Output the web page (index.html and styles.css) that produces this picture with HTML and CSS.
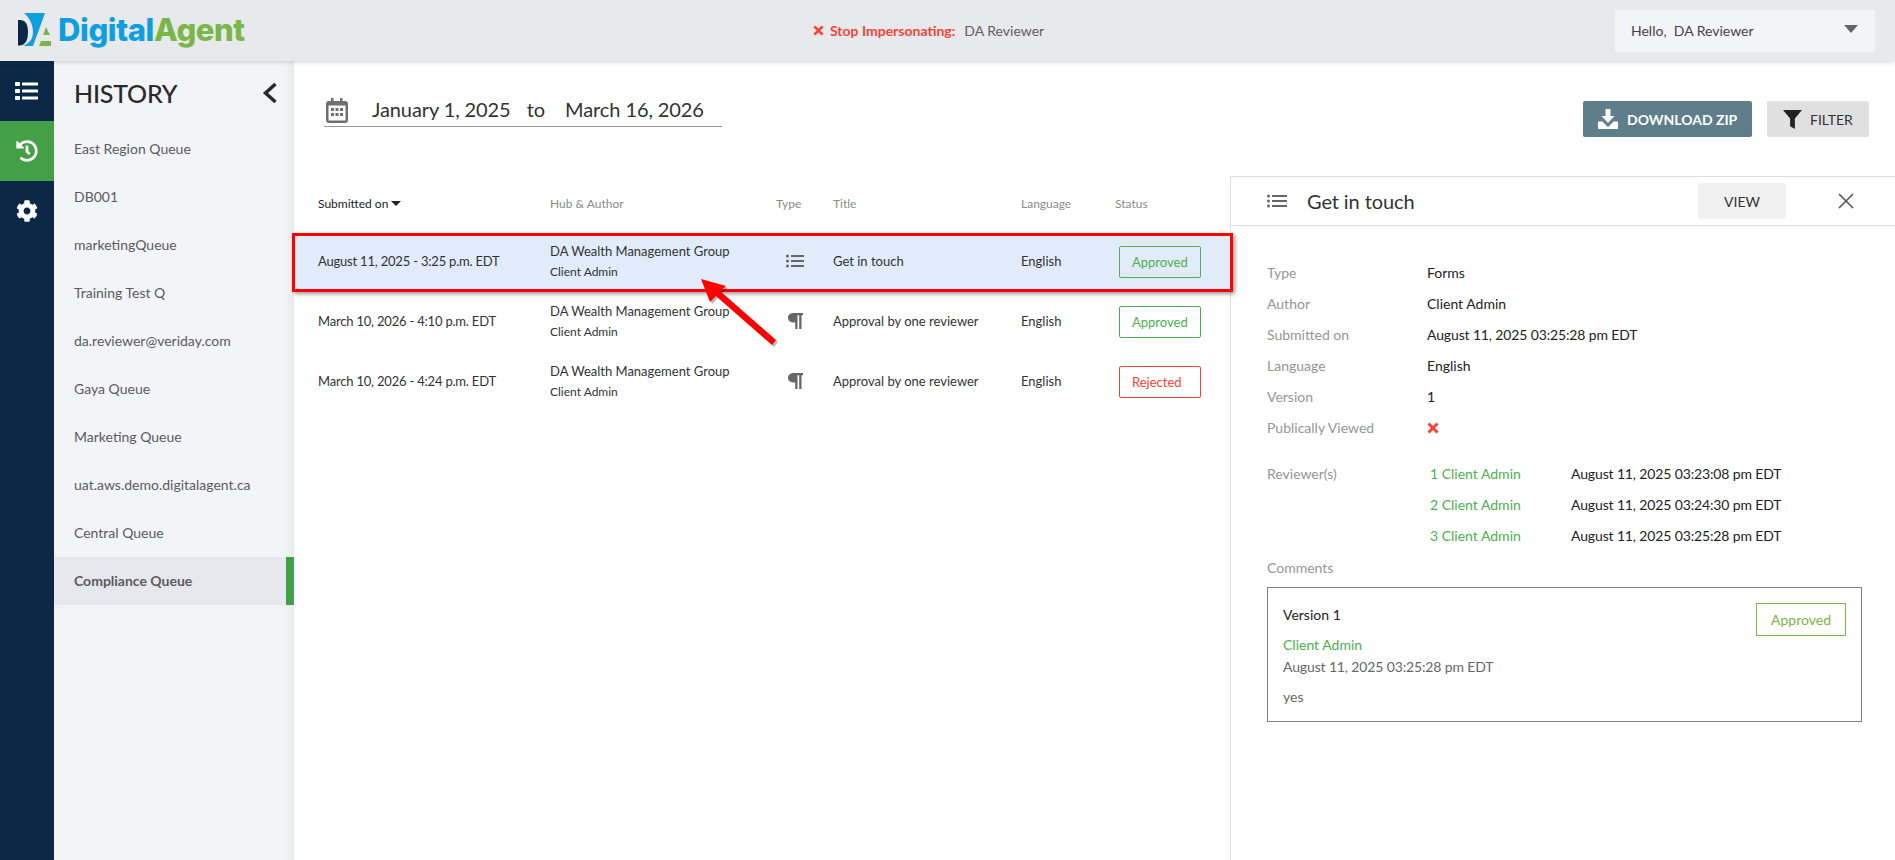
FILE: index.html
```html
<!DOCTYPE html>
<html lang="en">
<head>
<meta charset="utf-8">
<title>History</title>
<link rel="stylesheet" href="styles.css">
</head>
<body>
<header class="topbar">
  <div class="logo">
    <svg class="logo-mark" viewBox="0 0 40 36" width="40" height="36">
      <path fill="#0b2947" d="M0 8h2c6 0 8 5 8 12s-2 13-8 13.500H0z"/>
      <path fill="#0f9fdf" d="M6 1h21L15 34H5c5-2 10-6 10-14S11 5 6 1z"/>
      <path fill="#7ab648" d="M28 15l4 8h-7zM23 29h10v5H21z"/>
    </svg>
    <span class="logo-text"><span class="logo-blue">Digital</span><span class="logo-green">Agent</span></span>
  </div>
  <div class="impersonate">
    <svg class="x-icon" viewBox="0 0 12 12" width="11" height="11"><path d="M1.500 1.500l9 9M10.500 1.500l-9 9"/></svg>
    <span class="stop">Stop Impersonating:</span>
    <span>DA Reviewer</span>
  </div>
  <div class="hello">
    <span>Hello,&nbsp; DA Reviewer</span>
    <span class="caret"></span>
  </div>
</header>

<div class="main">
  <nav class="rail">
    <a class="rail-item">
      <svg viewBox="0 0 24 20" width="24" height="20" fill="#fff"><rect x="0" y="1" width="5" height="4" rx=".8"/><rect x="0" y="8" width="5" height="4" rx=".8"/><rect x="0" y="15" width="5" height="4" rx=".8"/><rect x="7" y="1.500" width="16" height="3" rx=".6"/><rect x="7" y="8.500" width="16" height="3" rx=".6"/><rect x="7" y="15.500" width="16" height="3" rx=".6"/></svg>
    </a>
    <a class="rail-item rail-active">
      <svg viewBox="0 0 512 512" width="22" height="22" fill="#fff"><path d="M504 255.531c.253 136.64-111.18 248.372-247.82 248.468-59.015.042-113.223-20.53-155.822-54.911-11.077-8.94-11.905-25.541-1.839-35.607l11.267-11.267c8.609-8.609 22.353-9.551 31.891-1.984C173.062 425.135 212.781 440 256 440c101.705 0 184-82.311 184-184 0-101.705-82.311-184-184-184-48.814 0-93.149 18.969-126.068 49.932l50.754 50.754c10.08 10.08 2.941 27.314-11.313 27.314H24c-8.837 0-16-7.163-16-16V38.627c0-14.254 17.234-21.393 27.314-11.314l49.372 49.372C129.209 34.136 189.552 8 256 8c136.81 0 247.747 110.78 248 247.531zm-180.912 78.784l9.823-12.63c8.138-10.463 6.253-25.542-4.21-33.679L288 256.349V152c0-13.255-10.745-24-24-24h-16c-13.255 0-24 10.745-24 24v135.651l65.409 50.874c10.463 8.137 25.541 6.253 33.679-4.21z"/></svg>
    </a>
    <a class="rail-item">
      <svg viewBox="0 0 512 512" width="22" height="22" fill="#fff"><path d="M487.4 315.7l-42.6-24.6c4.3-23.2 4.3-47 0-70.2l42.6-24.6c4.9-2.8 7.1-8.6 5.5-14-11.1-35.6-30-67.8-54.7-94.6-3.8-4.1-10-5.1-14.8-2.3L380.8 110c-17.9-15.4-38.5-27.3-60.8-35.1V25.8c0-5.6-3.9-10.5-9.4-11.7-36.7-8.2-74.3-7.8-109.2 0-5.5 1.2-9.4 6.1-9.4 11.7V75c-22.2 7.9-42.8 19.8-60.8 35.1L88.7 85.5c-4.9-2.8-11-1.9-14.8 2.3-24.7 26.7-43.6 58.9-54.7 94.6-1.7 5.4.6 11.2 5.5 14L67.3 221c-4.3 23.2-4.3 47 0 70.2l-42.6 24.6c-4.9 2.8-7.1 8.6-5.5 14 11.1 35.6 30 67.8 54.7 94.6 3.8 4.1 10 5.1 14.8 2.3l42.6-24.6c17.9 15.4 38.5 27.3 60.8 35.1v49.2c0 5.6 3.9 10.5 9.4 11.7 36.7 8.2 74.3 7.8 109.2 0 5.5-1.2 9.4-6.1 9.4-11.7v-49.2c22.2-7.9 42.8-19.8 60.8-35.1l42.6 24.6c4.9 2.8 11 1.9 14.8-2.3 24.7-26.7 43.6-58.9 54.7-94.6 1.5-5.5-.7-11.3-5.6-14.1zM256 336c-44.1 0-80-35.9-80-80s35.9-80 80-80 80 35.9 80 80-35.9 80-80 80z"/></svg>
    </a>
  </nav>

  <aside class="sidebar">
    <div class="side-head">
      <h1>HISTORY</h1>
      <svg class="chev" viewBox="0 0 16 22" width="16" height="22"><path d="M13.500 2L3.500 11l10 9"/></svg>
    </div>
    <ul class="queues">
      <li>East Region Queue</li>
      <li>DB001</li>
      <li>marketingQueue</li>
      <li>Training Test Q</li>
      <li>da.reviewer@veriday.com</li>
      <li>Gaya Queue</li>
      <li>Marketing Queue</li>
      <li>uat.aws.demo.digitalagent.ca</li>
      <li>Central Queue</li>
      <li class="queue-active">Compliance Queue</li>
    </ul>
  </aside>

  <section class="content">
    <div class="toolbar">
      <div class="dates">
        <svg class="cal" viewBox="0 0 22 25" width="22" height="25"><path fill="#6f6f6f" d="M5 0h2.500v3H14V0h2.500v3H19a3 3 0 0 1 3 3v16a3 3 0 0 1-3 3H3a3 3 0 0 1-3-3V6a3 3 0 0 1 3-3h2z"/><rect x="2.500" y="7.500" width="17" height="15" fill="#fff"/><g fill="#6f6f6f"><rect x="5" y="10" width="3" height="3"/><rect x="9.500" y="10" width="3" height="3"/><rect x="14" y="10" width="3" height="3"/><rect x="5" y="15" width="3" height="3"/><rect x="9.500" y="15" width="3" height="3"/><rect x="14" y="15" width="3" height="3"/></g></svg>
        <span class="date-val">January 1, 2025</span>
        <span class="date-to">to</span>
        <span class="date-val">March 16, 2026</span>
      </div>
      <div class="actions">
        <button class="btn btn-dark">
          <svg viewBox="0 0 20 20" width="20" height="20" fill="#fff"><path d="M7.500 0h5v7h4L10 14 3.500 7h4z"/><path d="M0 12.500h4.500L10 18l5.500-5.500H20V20H0z"/></svg>
          DOWNLOAD ZIP
        </button>
        <button class="btn btn-light">
          <svg viewBox="0 0 20 20" width="19" height="19" fill="#222"><path d="M0 0h20l-7.500 9v11l-5-3V9z"/></svg>
          FILTER
        </button>
      </div>
    </div>

    <div class="lower">
      <div class="table">
        <div class="row head">
          <span class="th-sort">Submitted on <i class="sort-caret"></i></span>
          <span>Hub &amp; Author</span>
          <span>Type</span>
          <span>Title</span>
          <span>Language</span>
          <span>Status</span>
        </div>
        <div class="row item selected">
          <span class="when">August 11, 2025 - 3:25 p.m. EDT</span>
          <div class="hub"><span>DA Wealth Management Group</span><small>Client Admin</small></div>
          <svg class="type-list" viewBox="0 0 18 14" width="18" height="14" fill="#666"><circle cx="1.500" cy="2" r="1.500"/><circle cx="1.500" cy="7" r="1.500"/><circle cx="1.500" cy="12" r="1.500"/><rect x="5" y="1" width="13" height="2"/><rect x="5" y="6" width="13" height="2"/><rect x="5" y="11" width="13" height="2"/></svg>
          <span>Get in touch</span>
          <span>English</span>
          <span class="pill ok">Approved</span>
        </div>
        <div class="row item">
          <span class="when">March 10, 2026 - 4:10 p.m. EDT</span>
          <div class="hub"><span>DA Wealth Management Group</span><small>Client Admin</small></div>
          <svg class="type-para" viewBox="0 0 15 16" width="15" height="16" fill="#666"><path d="M6 0h9v2.200h-1.500V16h-2.300V2.200H9.500V16H7.200V9.500H6C2.500 9.500 0 7.500 0 4.700S2.500 0 6 0z"/></svg>
          <span>Approval by one reviewer</span>
          <span>English</span>
          <span class="pill ok">Approved</span>
        </div>
        <div class="row item">
          <span class="when">March 10, 2026 - 4:24 p.m. EDT</span>
          <div class="hub"><span>DA Wealth Management Group</span><small>Client Admin</small></div>
          <svg class="type-para" viewBox="0 0 15 16" width="15" height="16" fill="#666"><path d="M6 0h9v2.200h-1.500V16h-2.300V2.200H9.500V16H7.200V9.500H6C2.500 9.500 0 7.500 0 4.700S2.500 0 6 0z"/></svg>
          <span>Approval by one reviewer</span>
          <span>English</span>
          <span class="pill bad">Rejected</span>
        </div>
        <svg class="arrow" viewBox="0 0 90 76" width="90" height="76">
          <path fill="#000" opacity=".28" d="M6 4l25 7-6 5 56 49-4 5-56-49-6 6z"/>
          <path fill="#f00" d="M4 2l25 7-6 5 56 49-4 5-56-49-6 6z"/>
        </svg>
      </div>

      <aside class="detail">
        <div class="detail-head">
          <svg viewBox="0 0 20 14" width="20" height="14" fill="#666"><circle cx="1.500" cy="2" r="1.500"/><circle cx="1.500" cy="7" r="1.500"/><circle cx="1.500" cy="12" r="1.500"/><rect x="5" y="1" width="15" height="2"/><rect x="5" y="6" width="15" height="2"/><rect x="5" y="11" width="15" height="2"/></svg>
          <h2>Get in touch</h2>
          <button class="view">VIEW</button>
          <svg class="close" viewBox="0 0 18 18" width="18" height="18"><path d="M2 2l14 14M16 2L2 16"/></svg>
        </div>
        <div class="detail-body">
          <dl class="facts">
            <dt>Type</dt><dd>Forms</dd>
            <dt>Author</dt><dd>Client Admin</dd>
            <dt>Submitted on</dt><dd class="stamp">August 11, 2025 03:25:28 pm EDT</dd>
            <dt>Language</dt><dd>English</dd>
            <dt>Version</dt><dd>1</dd>
            <dt>Publically Viewed</dt><dd><svg class="x-icon" viewBox="0 0 12 12" width="12" height="12"><path d="M1.500 1.500l9 9M10.500 1.500l-9 9"/></svg></dd>
          </dl>
          <div class="reviewers">
            <span class="rv-label">Reviewer(s)</span>
            <span class="rv-name">1 Client Admin</span><span class="stamp">August 11, 2025 03:23:08 pm EDT</span>
            <span class="rv-name rv-col">2 Client Admin</span><span class="stamp">August 11, 2025 03:24:30 pm EDT</span>
            <span class="rv-name rv-col">3 Client Admin</span><span class="stamp">August 11, 2025 03:25:28 pm EDT</span>
          </div>
          <div class="comments-label">Comments</div>
          <div class="comment">
            <span class="comment-badge">Approved</span>
            <div class="c-version">Version 1</div>
            <div class="c-author">Client Admin</div>
            <div class="c-date stamp">August 11, 2025 03:25:28 pm EDT</div>
            <div class="c-text">yes</div>
          </div>
        </div>
      </aside>
    </div>
  </section>
</div>
</body>
</html>
```

FILE: styles.css
```css
* { box-sizing: border-box; }
html, body { margin: 0; height: 100%; }
body {
  font-family: "Lato", "Liberation Sans", sans-serif;
  font-size: 14px;
  color: #333;
  background: #fff;
  overflow: hidden;
  display: flex;
  flex-direction: column;
}

/* top bar */
.topbar {
  height: 61px;
  flex: none;
  background: #e7e9ed;
  box-shadow: 0 1px 4px rgba(0, 0, 0, .18);
  display: flex;
  align-items: center;
  position: relative;
  z-index: 3;
}
.logo { width: 813px; display: flex; align-items: center; padding: 0 0 1px 18px; }
.logo-mark { margin-top: -1px; flex: none; }
.logo-text { font-family: "Inter", "Liberation Sans", sans-serif; font-weight: 800; font-size: 31px; letter-spacing: -.4px; line-height: 1; margin-top: -2px; }
.logo-blue { color: #0f9fdf; }
.logo-green { color: #7ab648; }
.impersonate { display: flex; align-items: center; width: 802px; color: #5f5f5f; font-size: 14px; }
.impersonate .x-icon { margin-right: 6px; }
.stop { color: #f44336; font-weight: 700; margin-right: 9px; }
.x-icon path { stroke: #f44336; stroke-width: 3; fill: none; }
.hello {
  width: 260px; height: 42px; background: #f3f4f7;
  display: flex; align-items: center; justify-content: space-between;
  padding: 0 17px 0 16px; color: #444; font-size: 14px;
}
.caret { width: 0; height: 0; border: 7px solid transparent; border-top: 8px solid #666; border-bottom: 0; margin-top: -3px; }

/* layout */
.main { flex: 1; display: flex; min-height: 0; }
.rail { width: 54px; flex: none; background: #0b2947; }
.rail-item { height: 60px; display: flex; align-items: center; justify-content: center; }
.rail-active { background: #43a047; }

.sidebar { width: 240px; flex: none; background: #f3f4f7; box-shadow: inset -14px 0 12px -12px rgba(0, 0, 0, .06); }
.side-head { height: 64px; display: flex; align-items: center; justify-content: space-between; padding: 0 16px 0 20px; }
.side-head h1 { margin: 0; font-size: 25px; font-weight: 500; color: #2a2a2a; letter-spacing: -.2px; }
.chev path { fill: none; stroke: #2a2a2a; stroke-width: 3.500; }
.queues { list-style: none; margin: 0; padding: 0; }
.queues li { height: 48px; line-height: 48px; padding-left: 20px; color: #5b5b5b; font-size: 14px; }
.queues .queue-active { background: #e6e8ed; font-weight: 700; border-right: 8px solid #43a047; }

.content { flex: 1; min-width: 0; display: flex; flex-direction: column; }
.toolbar { height: 115px; flex: none; display: flex; justify-content: space-between; padding: 40px 26px 0 30px; }
.dates { width: 398px; height: 35px; margin-top: -9px; border-bottom: 1px solid #999; display: flex; align-items: center; font-size: 20px; color: #333; }
.date-val { letter-spacing: -.1px; }
.cal { margin: 2px 24px 0 2px; flex: none; }
.date-to { margin: 0 20px 0 16px; }
.actions { display: flex; gap: 15px; }
.btn { height: 36px; border: 0; border-radius: 2px; display: flex; align-items: center; font-family: inherit; font-size: 14px; padding: 0; }
.btn-dark { width: 169px; background: #5f7d8b; color: #fff; font-weight: 700; gap: 9px; padding-left: 15px; }
.btn-light { width: 102px; background: #e0e0e0; color: #333; gap: 8px; padding-left: 16px; }

.lower { flex: 1; display: flex; min-height: 0; }
.table { width: 936px; flex: none; position: relative; }
.row { display: grid; grid-template-columns: 232px 226px 57px 188px 94px 1fr; align-items: center; padding-left: 24px; }
.head { height: 55px; font-size: 12px; color: #8a8a8a; }
.th-sort { color: #222; display: flex; align-items: center; gap: 3px; }
.sort-caret { width: 0; height: 0; border: 5px solid transparent; border-top: 5px solid #222; border-bottom: 0; }
.item { height: 60px; font-size: 13px; color: #333; position: relative; z-index: 0; }
.when { letter-spacing: -.2px; }
.selected::before {
  content: "";
  position: absolute;
  top: 2px; bottom: -1px; left: -2px; right: -3px;
  z-index: -1;
  background: #e1ebf9;
  border: 3px solid #f00;
  box-shadow: 2px 2px 4px rgba(0, 0, 0, .4);
}
.hub { display: flex; flex-direction: column; gap: 5px; }
.hub small { font-size: 12px; }
.type-list { margin-left: 10px; }
.type-para { margin-left: 12px; }
.pill { width: 82px; height: 32px; margin: 2px 0 0 4px; border: 1px solid; border-radius: 2px; display: flex; align-items: center; padding-left: 12px; }
.pill.ok { color: #4caf50; border-color: #4caf50; }
.pill.bad { color: #f44336; border-color: #f44336; }
.arrow { position: absolute; left: 403px; top: 101px; }

/* detail */
.detail { flex: 1; border: 1px solid #ddd; border-width: 1px 0 0 1px; min-width: 0; }
.detail-head { height: 49px; border-bottom: 1px solid #ddd; display: flex; align-items: center; padding-left: 36px; }
.detail-head h2 { margin: 0 0 0 20px; font-size: 20px; font-weight: 400; color: #333; flex: 1; letter-spacing: -.1px; }
.view { width: 88px; height: 36px; background: #f1f1f1; border: 0; border-radius: 2px; font-family: inherit; font-size: 14px; color: #333; padding: 0; }
.close { margin: 0 40px 0 51px; }
.close path { stroke: #555; stroke-width: 1.600; fill: none; }
.detail-body { padding: 31px 33px 0 36px; font-size: 14px; color: #222; }
.stamp { letter-spacing: -.14px; }
.facts { margin: 0; display: grid; grid-template-columns: 160px 1fr; grid-auto-rows: 31px; align-items: center; }
.facts dt { color: #959595; }
.facts dd { margin: 0; display: flex; align-items: center; }
.reviewers { margin-top: 15px; display: grid; grid-template-columns: 163px 141px 1fr; grid-auto-rows: 31px; align-items: center; }
.rv-name { color: #4caf50; }
.rv-col { grid-column: 2; }
.rv-label, .comments-label { color: #959595; }
.comments-label { height: 31px; line-height: 31px; margin-top: 1px; }
.comment { height: 135px; margin-top: 4px; border: 1px solid #808080; padding: 17px 15px 0; position: relative; }
.comment-badge { position: absolute; top: 15px; right: 15px; width: 90px; height: 33px; border: 1px solid #7ab648; color: #7ab648; display: flex; align-items: center; justify-content: center; }
.c-version { line-height: 20px; }
.c-author { color: #4caf50; margin-top: 10px; line-height: 20px; }
.c-date { color: #666; line-height: 20px; margin-top: 2px; }
.c-text { color: #666; line-height: 20px; margin-top: 10px; }
```
